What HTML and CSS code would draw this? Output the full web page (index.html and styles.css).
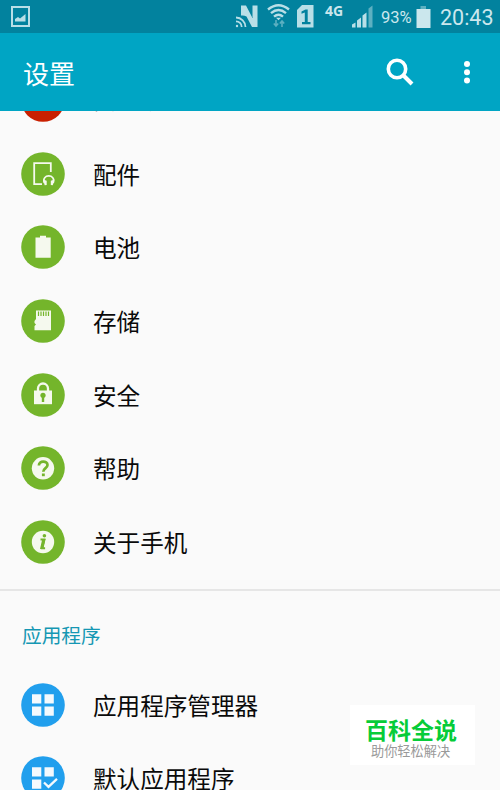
FILE: index.html
```html
<!DOCTYPE html>
<html lang="zh-CN">
<head>
  <meta charset="UTF-8" />
  <meta name="viewport" content="width=device-width, initial-scale=1.0" />
  <title>设置</title>
  <link rel="stylesheet" href="styles.css">
</head>
<body>
  <!-- 状态栏 -->
  <div class="status-bar">
    <svg class="picture" width="19" height="21" viewBox="0 0 19 21">
      <rect x="1" y="1" width="17" height="19" fill="none" stroke="#b9dfe7" stroke-width="2" />
      <path d="M4 15.500v-2.500l3-2 2 1.500 5.500-4.500v7.500z" fill="#b9dfe7" />
    </svg>
    <svg class="signals" width="142" height="33" viewBox="234 0 142 33">
      <!-- NFC -->
      <path d="M241 15.500V5.500h5l6.500 12.500V5.500h5v21.500h-5.500l-5.500-10.500q-2.500-1.500-5.500-1z" fill="#b9dfe7" />
      <path d="M236 17.500a9.500 9.500 0 0 1 9.500 9.500M236 21.300a5.700 5.700 0 0 1 5.700 5.700" fill="none" stroke="#b9dfe7" stroke-width="1.800" />
      <circle cx="237" cy="26" r="1.200" fill="#b9dfe7" />
      <!-- WiFi -->
      <path d="M268 9.500q10.500-8.500 21 0M271 13.200q7.500-6.200 15 0M274 16.700q4.500-3.800 9 0" fill="none" stroke="#b9dfe7" stroke-width="2.400" />
      <path d="M276 17.800h5l-2.500 2.500z" fill="#b9dfe7" />
      <path d="M276 20v6M273.800 23.500l2.200 2.500 2.200-2.500M282 27v-6M279.800 23.500l2.200-2.500 2.200 2.500" fill="none" stroke="#5db0c1" stroke-width="1.600" />
      <!-- SIM -->
      <path d="M302 5h11.500v22.500H297V10z" fill="#b9dfe7" />
      <path d="M301.500 11.500l4-2h2.200v12.500h2.800v2.200h-8.500V22h2.800v-9.500l-3.300 1.200z" fill="#02829e" />
      <text x="325" y="15.800" class="network">4G</text>
      <!-- 信号 -->
      <path d="M352 24.500l3.500-2v5H352zM357 20.500l4-3v10h-4zM362.500 15.500l4-3v15h-4z" fill="#b9dfe7" />
      <path d="M368.500 8.500l4-3v22h-4z" fill="#5db0c1" />
    </svg>
    <span class="percent">93%</span>
    <svg class="battery" width="15" height="22" viewBox="0 0 15 22">
      <path d="M4.500 0h5.500v3H4.500z" fill="#5db0c1" />
      <path d="M0.500 3h14v19h-14z" fill="#cbe7ed" />
    </svg>
    <span class="clock">20:43</span>
  </div>

  <!-- 标题栏 -->
  <header>
    <div class="title">设置</div>
    <svg class="search" width="28" height="28" viewBox="0 0 28 28">
      <circle cx="11" cy="11" r="8.700" fill="none" stroke="#fff" stroke-width="3.600" />
      <path d="M17 17l9 9" stroke="#fff" stroke-width="4" />
    </svg>
    <svg class="more" width="8" height="24" viewBox="0 0 8 24">
      <circle cx="4" cy="4" r="3" fill="#fff" />
      <circle cx="4" cy="12.300" r="3" fill="#fff" />
      <circle cx="4" cy="20.600" r="3" fill="#fff" />
    </svg>
  </header>

  <main>
    <div class="list system">
      <div class="item scrolled">
        <svg class="icon" viewBox="0 0 44 44"><circle cx="22" cy="22" r="21.800" fill="#c92000" /></svg>
        <span>安全助手</span>
      </div>
      <div class="item">
        <svg class="icon" viewBox="0 0 44 44">
          <circle cx="22" cy="22" r="21.800" fill="#74b52b" />
          <path d="M21 32.200H13.200V11.200h16.600V20" fill="none" stroke="#f5f9ee" stroke-width="1.800" />
          <path d="M23.300 31c-3.500-9.500 12.400-9.500 8.900 0" fill="none" stroke="#f5f9ee" stroke-width="1.600" />
          <path d="M22 27.500l3.700 1.200v4.300l-2 .300zM33.500 27.500l-3.700 1.200v4.300l2 .300z" fill="#f5f9ee" />
        </svg>
        <span>配件</span>
      </div>
      <div class="item">
        <svg class="icon" viewBox="0 0 44 44">
          <circle cx="22" cy="22" r="21.800" fill="#74b52b" />
          <path d="M14.500 12.500h4.500v-1.800h6v1.800h4.700v20.300H14.500z" fill="#f5f9ee" />
        </svg>
        <span>电池</span>
      </div>
      <div class="item">
        <svg class="icon" viewBox="0 0 44 44">
          <circle cx="22" cy="22" r="21.800" fill="#74b52b" />
          <path d="M15 11.500h15v19.700H13.500V27l1.500-1.500-1.500-1.500v-2l1.500-2z" fill="#f5f9ee" />
          <path d="M17.500 12.500v4.500M20 12.500v4.500M22.500 12.500v4.500M25 12.500v4.500M27.500 12.500v4.500" stroke="#74b52b" stroke-width="1.200" />
        </svg>
        <span>存储</span>
      </div>
      <div class="item">
        <svg class="icon" viewBox="0 0 44 44">
          <circle cx="22" cy="22" r="21.800" fill="#74b52b" />
          <path d="M17 18v-2.500a5 5 0 0 1 10 0V18" fill="none" stroke="#f5f9ee" stroke-width="2.300" />
          <path d="M13 17.500h18v13.700H13z" fill="#f5f9ee" />
          <circle cx="22" cy="22.300" r="2.600" fill="#74b52b" />
          <path d="M22 23v6" stroke="#74b52b" stroke-width="2.400" />
        </svg>
        <span>安全</span>
      </div>
      <div class="item">
        <svg class="icon" viewBox="0 0 44 44">
          <circle cx="22" cy="22" r="21.800" fill="#74b52b" />
          <circle cx="22" cy="22.300" r="11.200" fill="#f5f9ee" />
          <path d="M17.900 19.500c0-5.300 8.600-5 8.600-.5 0 3.200-4.200 3-4.200 6.800" fill="none" stroke="#74b52b" stroke-width="2.700" />
          <path d="M20.900 27.500h2.900v2.700h-2.900z" fill="#74b52b" />
        </svg>
        <span>帮助</span>
      </div>
      <div class="item">
        <svg class="icon" viewBox="0 0 44 44">
          <circle cx="22" cy="22" r="21.800" fill="#74b52b" />
          <circle cx="22" cy="22" r="11.200" fill="#f5f9ee" />
          <circle cx="23.400" cy="15.700" r="1.800" fill="#74b52b" />
          <path d="M19.500 19.500h3.800l-2.200 8.800h3" fill="none" stroke="#74b52b" stroke-width="2" />
          <path d="M21.300 19h3.300l-2.300 10h-3.300z" fill="#74b52b" />
        </svg>
        <span>关于手机</span>
      </div>
    </div>

    <h2>应用程序</h2>

    <div class="list">
      <div class="item">
        <svg class="icon" viewBox="0 0 44 44">
          <circle cx="22" cy="22" r="21.800" fill="#219fed" />
          <path d="M11 11.300h9.300v9.300H11zM23.500 11.300h9.300v9.300h-9.300zM11 23.500h9.300v9.300H11zM23.500 23.500h9.300v9.300h-9.300z" fill="#f4f9fd" />
        </svg>
        <span>应用程序管理器</span>
      </div>
      <div class="item">
        <svg class="icon" viewBox="0 0 44 44">
          <circle cx="22" cy="22" r="21.800" fill="#219fed" />
          <path d="M11 11.300h9.300v9.300H11zM23.500 11.300h9.300v9.300h-9.300zM11 23.500h9.300v9.300H11z" fill="#f4f9fd" />
          <path d="M23 26.500l4.500 4.300 8.500-8" fill="none" stroke="#f4f9fd" stroke-width="2.300" />
        </svg>
        <span>默认应用程序</span>
      </div>
    </div>
  </main>

  <!-- 水印 -->
  <div class="watermark">
    <div class="brand">百科全说</div>
    <div class="slogan">助你轻松解决</div>
  </div>
</body>
</html>
```

FILE: styles.css
```css
body {
  font-family: "Noto Sans CJK SC", sans-serif;
  margin: 0;
  height: 790px;
  display: flex;
  flex-direction: column;
  overflow: hidden;
  background-color: #fafafa;
  color: #0a0a0a;
}

.status-bar {
  display: flex;
  align-items: center;
  flex: none;
  height: 33px;
  box-sizing: border-box;
  padding-left: 11px;
  background-color: #02829e;
  color: #cbe7ed;
  font-family: Roboto, sans-serif;
}

.signals {
  margin-left: 204px;
}

.network {
  font: bold 14px "Noto Sans", sans-serif;
  fill: #cbe7ed;
}

.percent {
  width: 35px;
  margin-left: 5px;
  padding-top: 2px;
  font-size: 16.500px;
  white-space: nowrap;
}

.clock {
  margin-left: 9px;
  padding-top: 2px;
  font-size: 21.500px;
}

header {
  display: flex;
  align-items: center;
  flex: none;
  height: 78px;
  box-sizing: border-box;
  padding: 0 29px 0 23px;
  background-color: #00a5c4;
}

.title {
  flex: 1;
  font-size: 26px;
  color: #fff;
}

.search {
  margin-right: 49px;
}

main {
  flex: 1;
  min-height: 0;
  overflow: hidden;
}

.system {
  margin-top: -47.900px;
  padding-bottom: 10px;
  border-bottom: 2px solid #e6e6e6;
}

.item {
  display: flex;
  align-items: center;
  height: 73.700px;
  padding-left: 21px;
  font-size: 23.600px;
  white-space: nowrap;
}

.scrolled span {
  padding-bottom: 1px;
}

.icon {
  flex: none;
  width: 44px;
  height: 44px;
  margin-right: 28px;
}

h2 {
  margin: 0;
  padding-left: 22px;
  height: 77px;
  line-height: 88px;
  font-size: 19.700px;
  font-weight: normal;
  color: #1597b3;
}

.watermark {
  position: absolute;
  left: 350px;
  top: 705px;
  width: 125px;
  height: 60px;
  background-color: #fff;
}

.brand {
  margin-top: 9px;
  padding-left: 15px;
  font-size: 23px;
  line-height: 30px;
  font-weight: bold;
  color: #06cc38;
}

.slogan {
  padding-left: 21px;
  font-size: 13.200px;
  line-height: 14px;
  color: #999;
}
```
